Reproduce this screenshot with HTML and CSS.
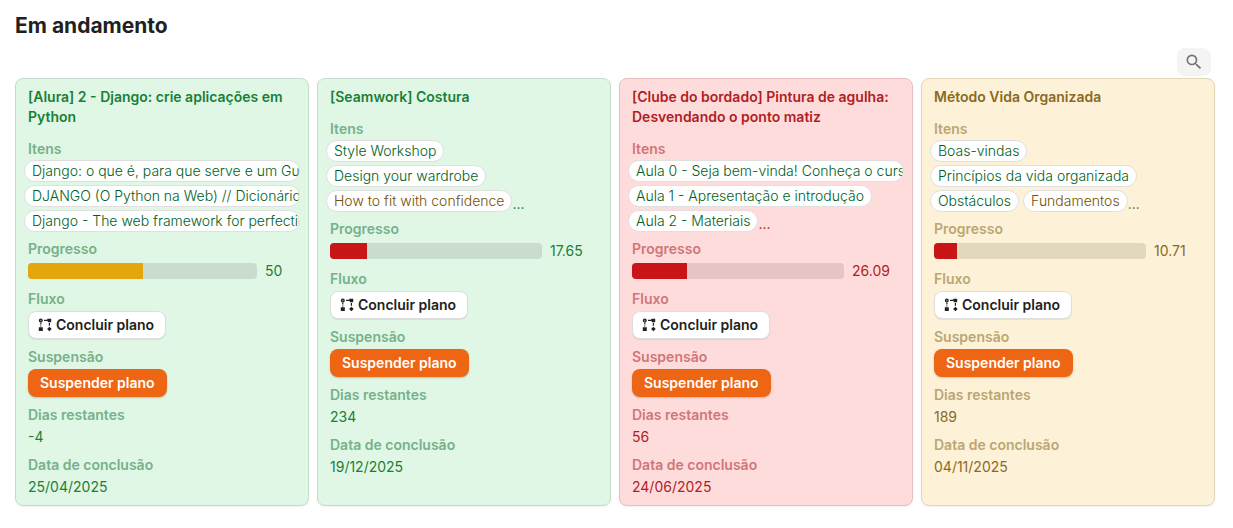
FILE: index.html
```html
<!DOCTYPE html>
<html lang="pt-BR">
<head>
<meta charset="utf-8">
<meta name="viewport" content="width=device-width, initial-scale=1">
<title>Em andamento</title>
<link rel="stylesheet" href="styles.css">
</head>
<body>
<svg class="sprite" width="0" height="0" aria-hidden="true">
  <symbol id="flow" viewBox="0 0 14 14">
    <circle cx="2.8" cy="2.600" r="1.400" fill="#888" stroke="currentColor" stroke-width="1.2"/>
    <path fill="none" stroke="currentColor" stroke-width="1.2" d="M2.8 4.600v2M2.8 7.400v1.200M6 2.400h3.500M11.400 5v2.800"/>
    <path fill="currentColor" d="M.8 9.200h4V13h-4zM9.400 .8h3.800v3.400h-3L9 2.500zM11.400 8.700l2.300 2.300-2.300 2.300L9.100 11z"/>
  </symbol>
</svg>
<main class="page">
  <h1 class="heading">Em andamento</h1>
  <div class="toolbar">
    <button class="search" type="button" aria-label="Pesquisar">
      <svg width="20" height="20" viewBox="0 0 24 24" aria-hidden="true"><path fill="currentColor" d="M15.5 14h-.79l-.28-.27A6.471 6.471 0 0 0 16 9.500 6.500 6.500 0 1 0 9.500 16c1.610 0 3.090-.59 4.230-1.570l.27.28v.79l5 4.990L20.490 19l-4.990-5zm-6 0C7.010 14 5 11.990 5 9.500S7.010 5 9.500 5 14 7.010 14 9.500 11.990 14 9.500 14z"/></svg>
    </button>
  </div>
  <div class="board">
    <article class="card green">
      <h2 class="title">[Alura] 2 - Django: crie aplicações em Python</h2>
      <section class="field"><h3 class="label">Itens</h3>
        <div class="pills">
          <div class="row"><span class="pill">Django: o que é, para que serve e um Guia</span></div>
          <div class="row"><span class="pill">DJANGO (O Python na Web) // Dicionário</span></div>
          <div class="row"><span class="pill">Django - The web framework for perfectio</span></div>
        </div>
      </section>
      <section class="field"><label class="label" for="p1">Progresso</label>
        <div class="meter"><progress class="bar half" id="p1" max="100" value="50"></progress><span class="amount short">50</span></div>
      </section>
      <section class="field"><h3 class="label">Fluxo</h3>
        <button class="button" type="button"><svg class="flow" aria-hidden="true"><use href="#flow"/></svg>Concluir plano</button>
      </section>
      <section class="field"><h3 class="label">Suspensão</h3>
        <button class="button suspend" type="button">Suspender plano</button>
      </section>
      <section class="field"><h3 class="label">Dias restantes</h3><p class="value">-4</p></section>
      <section class="field"><h3 class="label">Data de conclusão</h3><p class="value">25/04/2025</p></section>
    </article>

    <article class="card green">
      <h2 class="title">[Seamwork] Costura</h2>
      <section class="field"><h3 class="label">Itens</h3>
        <div class="pills">
          <div class="row"><span class="pill">Style Workshop</span></div>
          <div class="row"><span class="pill">Design your wardrobe</span></div>
          <div class="row"><span class="pill pending">How to fit with confidence</span><span class="more">...</span></div>
        </div>
      </section>
      <section class="field"><label class="label" for="p2">Progresso</label>
        <div class="meter"><progress class="bar" id="p2" max="100" value="17.65"></progress><span class="amount">17.65</span></div>
      </section>
      <section class="field"><h3 class="label">Fluxo</h3>
        <button class="button" type="button"><svg class="flow" aria-hidden="true"><use href="#flow"/></svg>Concluir plano</button>
      </section>
      <section class="field"><h3 class="label">Suspensão</h3>
        <button class="button suspend" type="button">Suspender plano</button>
      </section>
      <section class="field"><h3 class="label">Dias restantes</h3><p class="value">234</p></section>
      <section class="field"><h3 class="label">Data de conclusão</h3><p class="value">19/12/2025</p></section>
    </article>

    <article class="card red">
      <h2 class="title">[Clube do bordado] Pintura de agulha: Desvendando o ponto matiz</h2>
      <section class="field"><h3 class="label">Itens</h3>
        <div class="pills">
          <div class="row"><span class="pill">Aula 0 - Seja bem-vinda! Conheça o curso</span></div>
          <div class="row"><span class="pill">Aula 1 - Apresentação e introdução</span></div>
          <div class="row"><span class="pill">Aula 2 - Materiais</span><span class="more">...</span></div>
        </div>
      </section>
      <section class="field"><label class="label" for="p3">Progresso</label>
        <div class="meter"><progress class="bar" id="p3" max="100" value="26.09"></progress><span class="amount">26.09</span></div>
      </section>
      <section class="field"><h3 class="label">Fluxo</h3>
        <button class="button" type="button"><svg class="flow" aria-hidden="true"><use href="#flow"/></svg>Concluir plano</button>
      </section>
      <section class="field"><h3 class="label">Suspensão</h3>
        <button class="button suspend" type="button">Suspender plano</button>
      </section>
      <section class="field"><h3 class="label">Dias restantes</h3><p class="value">56</p></section>
      <section class="field"><h3 class="label">Data de conclusão</h3><p class="value">24/06/2025</p></section>
    </article>

    <article class="card yellow">
      <h2 class="title">Método Vida Organizada</h2>
      <section class="field"><h3 class="label">Itens</h3>
        <div class="pills">
          <div class="row"><span class="pill">Boas-vindas</span></div>
          <div class="row"><span class="pill">Princípios da vida organizada</span></div>
          <div class="row"><span class="pill">Obstáculos</span><span class="pill pending">Fundamentos</span><span class="more">...</span></div>
        </div>
      </section>
      <section class="field"><label class="label" for="p4">Progresso</label>
        <div class="meter"><progress class="bar" id="p4" max="100" value="10.71"></progress><span class="amount">10.71</span></div>
      </section>
      <section class="field"><h3 class="label">Fluxo</h3>
        <button class="button" type="button"><svg class="flow" aria-hidden="true"><use href="#flow"/></svg>Concluir plano</button>
      </section>
      <section class="field"><h3 class="label">Suspensão</h3>
        <button class="button suspend" type="button">Suspender plano</button>
      </section>
      <section class="field"><h3 class="label">Dias restantes</h3><p class="value">189</p></section>
      <section class="field"><h3 class="label">Data de conclusão</h3><p class="value">04/11/2025</p></section>
    </article>
  </div>
</main>
</body>
</html>
```
FILE: styles.css
```css
* {
  box-sizing: border-box;
}

body {
  margin: 0;
  background: #fff;
  color: #212121;
  font: 14px/20px Inter, "Liberation Sans", sans-serif;
}

h1, h2, h3, p {
  margin: 0;
}

.sprite {
  position: absolute;
}

.page {
  padding: 11px 18px 22px 15px;
}

.heading {
  font-size: 21px;
  font-weight: 700;
  line-height: 30px;
}

.toolbar {
  display: flex;
  justify-content: flex-end;
  padding: 7px 4px 2px 0;
}

.search {
  display: flex;
  align-items: center;
  justify-content: center;
  width: 34px;
  height: 28px;
  padding: 0;
  border: 0;
  border-radius: 8px;
  background: #f4f4f4;
  color: #757575;
}

.board {
  display: grid;
  grid-template-columns: repeat(4, minmax(0, 1fr));
  gap: 8px;
}

.card {
  --ink: #1a7f37;
  --label: #76b18a;
  --track: #cadcce;
  display: flex;
  flex-direction: column;
  gap: 8px;
  padding: 8px 12px;
  border: 1px solid #c3dccb;
  border-radius: 8px;
  background: #e0f7e5;
  box-shadow: 0 1px 2px rgba(0, 0, 0, 0.06);
  color: var(--ink);
}

.red {
  --ink: #b01e23;
  --label: #d0767a;
  --track: #e4c4c4;
  border-color: #e6c0c1;
  background: #ffdcdc;
}

.yellow {
  --ink: #8a6a1f;
  --label: #bba673;
  --track: #e2d8be;
  border-color: #e0d6b8;
  background: #fdf2d8;
}

.title {
  margin-bottom: 4px;
  font-size: 14px;
  font-weight: 600;
}

.field {
  display: flex;
  flex-direction: column;
  align-items: flex-start;
  gap: 2px;
}

.label {
  color: var(--label);
  font-size: 14px;
  font-weight: 600;
}

.pills {
  display: flex;
  flex-direction: column;
  align-self: stretch;
  gap: 3px;
  margin: -1px -4px;
}

.row {
  display: flex;
  gap: 4px;
}

.pill {
  flex: 0 1 auto;
  min-width: 0;
  padding: 0 7px;
  overflow: hidden;
  border: 1px solid #e0e0e0;
  border-radius: 11px;
  background: #fff;
  color: #00611c;
  font-weight: 300;
  white-space: nowrap;
}

.pending {
  color: #744f00;
}

.more {
  align-self: flex-end;
  height: 18px;
  margin-left: -4px;
}

.meter {
  display: flex;
  align-self: stretch;
  align-items: center;
  gap: 8px;
}

.bar {
  flex: 1;
  min-width: 0;
  height: 16px;
  overflow: hidden;
  appearance: none;
  border: 0;
  border-radius: 4px;
  background: var(--track);
}

.bar::-webkit-progress-bar {
  background: var(--track);
}

.bar::-webkit-progress-value {
  background: #c91517;
}

.half::-webkit-progress-value {
  background: #e3a60d;
}

.amount {
  width: 48px;
}

.short {
  width: 31px;
}

.button {
  display: flex;
  align-items: center;
  gap: 4px;
  height: 28px;
  padding: 0 11px 0 9px;
  border: 1px solid #dedede;
  border-radius: 8px;
  background: #fff;
  box-shadow: 0 1px 1px rgba(0, 0, 0, 0.08);
  color: #212121;
  font: inherit;
  font-weight: 600;
}

.suspend {
  padding: 0 12px;
  border: 0;
  background: #ee6514;
  box-shadow: 0 1px 2px rgba(0, 0, 0, 0.2);
  color: #fff;
}

.flow {
  width: 14px;
  height: 14px;
}
```
